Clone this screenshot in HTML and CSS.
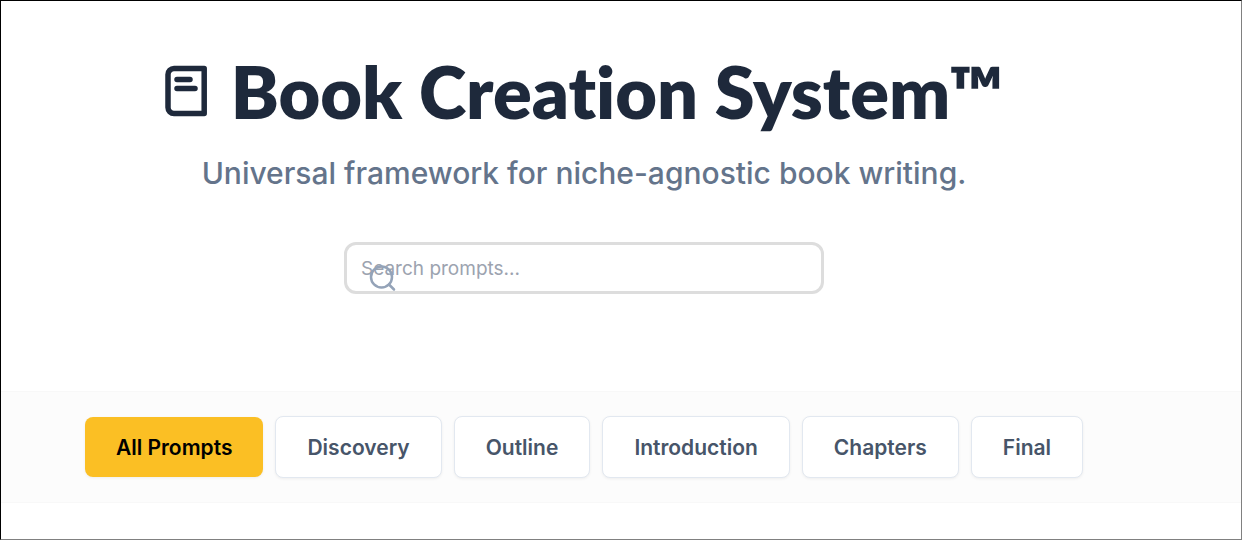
FILE: index.html
```html
<!DOCTYPE html>
<html lang="en">
<head>
<meta charset="UTF-8">
<meta name="viewport" content="width=device-width, initial-scale=1.0">
<title>Book Creation System</title>
<link rel="stylesheet" href="styles.css">
</head>
<body>

<header class="hero">
    <h1 class="title">
        <svg class="title-icon" viewBox="0 0 42 52" fill="none" stroke="currentColor" stroke-width="5.500" aria-hidden="true">
            <path d="M39.200 3.500H9a6 6 0 0 0-6 6v33a6 6 0 0 0 6 6h30.200z" stroke-linejoin="round"/>
            <path d="M12 14.500h13M12 23.500h18" stroke-linecap="round"/>
        </svg>
        <span>Book Creation System™</span>
    </h1>
    <p class="subtitle">Universal framework for niche-agnostic book writing.</p>
    <div class="search">
        <input type="text" class="search-input" placeholder="Search prompts..." aria-label="Search prompts">
        <svg class="search-icon" viewBox="0 0 28 28" fill="none" stroke="currentColor" stroke-width="2.500" stroke-linecap="round" aria-hidden="true">
            <circle cx="12.500" cy="13" r="10.500"/>
            <path d="M20 20.500l5 5"/>
        </svg>
    </div>
</header>

<nav class="filters">
    <button class="filter active">All Prompts</button>
    <button class="filter">Discovery</button>
    <button class="filter">Outline</button>
    <button class="filter">Introduction</button>
    <button class="filter">Chapters</button>
    <button class="filter">Final</button>
</nav>

</body>
</html>
```

FILE: styles.css
```css
* {
    box-sizing: border-box;
}

html {
    height: 100%;
}

body {
    margin: 0;
    min-height: 100%;
    border: 1px solid #000000;
    border-right-color: #808080;
    border-bottom-color: #808080;
    background-color: #ffffff;
    font-family: Inter, "Liberation Sans", sans-serif;
}

.hero {
    display: flex;
    flex-direction: column;
    align-items: center;
    padding: 48px 74px 97px 0;
}

.title {
    display: flex;
    align-items: center;
    gap: 24px;
    margin: 0;
    color: #1e293b;
    font-family: Lato, Inter, sans-serif;
    font-size: 72px;
    font-weight: 800;
    font-variant-ligatures: none;
    line-height: 84px;
    white-space: nowrap;
}

.title-icon {
    width: 42px;
    height: 52px;
}

.subtitle {
    margin: 20px 0 49px;
    color: #64748b;
    font-size: 30px;
    font-weight: 500;
    line-height: 40px;
}

.search {
    position: relative;
    width: 480px;
    max-width: 100%;
}

.search-input {
    display: block;
    width: 100%;
    height: 52px;
    padding: 0 14px;
    border: 3px solid #dddddd;
    border-radius: 12px;
    background-color: #ffffff;
    color: #1e293b;
    font-family: inherit;
    font-size: 19px;
    outline: none;
}

.search-input::placeholder {
    color: #9ca3af;
}

.search-icon {
    position: absolute;
    top: 22px;
    left: 25px;
    width: 28px;
    height: 28px;
    color: #94a3b8;
    pointer-events: none;
}

.filters {
    display: flex;
    flex-wrap: wrap;
    justify-content: center;
    align-items: center;
    gap: 12px;
    padding: 24px 74px 24px 0;
    border-top: 1px solid #f8f8f8;
    border-bottom: 1px solid #f8f8f8;
    background-color: #fcfcfc;
}

.filter {
    height: 62px;
    padding: 0 31px;
    border: 1px solid #e2e8f0;
    border-radius: 8px;
    background-color: #ffffff;
    box-shadow: 0 1px 3px rgba(0, 0, 0, 0.06);
    color: #475569;
    font-family: inherit;
    font-size: 21px;
    font-weight: 600;
    cursor: pointer;
}

.filter.active {
    height: 60px;
    border: none;
    background-color: #fbbf24;
    color: #000000;
}
```
